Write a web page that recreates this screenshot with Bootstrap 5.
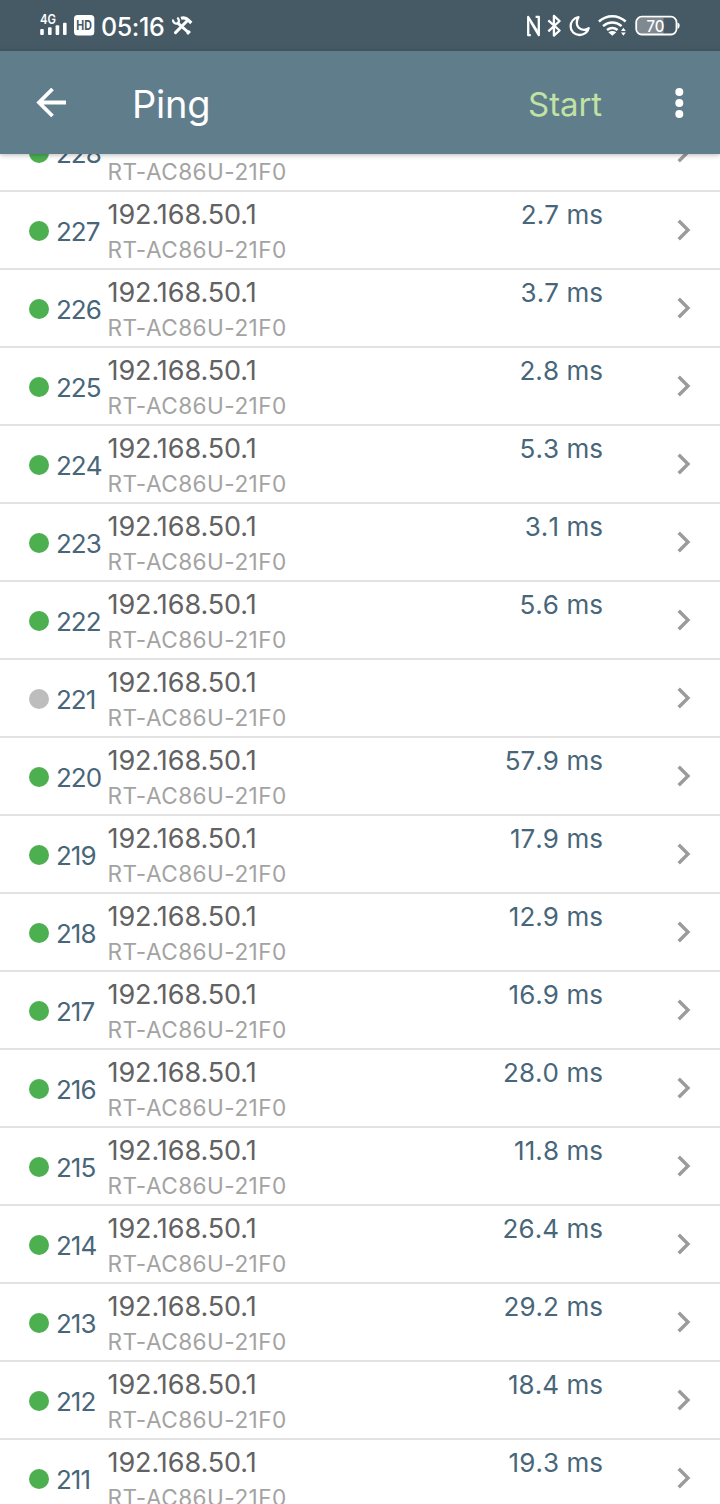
<!DOCTYPE html>
<html lang="en">
<head>
<meta charset="utf-8">
<meta name="viewport" content="width=device-width, initial-scale=1">
<title>Ping</title>
<link href="https://cdn.jsdelivr.net/npm/bootstrap@5.3.0/dist/css/bootstrap.min.css" rel="stylesheet">
<style>
  body { font-family: Inter, "Liberation Sans", sans-serif; height: 1504px; background: #fff; }
  svg { display: block; flex: none; }
  .status-bar { height: 51px; background: #465a65; padding-left: 38px; padding-right: 40px; }
  .clock { font-size: 25px; line-height: 51px; font-weight: 500; letter-spacing: -.4px; color: #fff; margin-left: 5px; padding-top: 2px; width: 69px; white-space: nowrap; }
  .app-bar { height: 103px; background: #607d8c; padding-left: 36px; padding-right: 34px; box-shadow: 0 1px 5px rgba(0,0,0,.28); z-index: 2; }
  .app-title { font-size: 38px; line-height: 50px; letter-spacing: -.2px; margin: 3px 0 0 66px; color: #fff; }
  .start-btn { font-size: 33px; line-height: 50px; color: #c0e3a4; margin: 3px 70px 0 auto; letter-spacing: -.1px; }
  .ping-list { margin-top: -40px; }
  .ping-row { height: 78px; border-bottom: 2px solid #e2e2e2; padding-left: 29px; padding-right: 29px; }
  .dot { width: 20px; height: 20px; flex: none; margin-top: 1px; background: #4caf50; }
  .dot.lost { background: #bdbdbd; }
  .seq { width: 51px; margin: 4px 0 0 7px; font-size: 26px; line-height: 36px; letter-spacing: -1px; font-kerning: none; color: #48667a; }
  .host { padding-top: 5px; }
  .ip { font-size: 27px; line-height: 36px; letter-spacing: -.08px; color: #626262; padding-left: .5px; }
  .host-name { font-size: 22.6px; line-height: 30px; letter-spacing: .45px; margin-top: 2px; color: #a3a3a3; padding-left: .5px; }
  .rtt { font-size: 26px; line-height: 36px; padding-top: 5px; margin-right: 74px; letter-spacing: .05px; font-kerning: none; color: #48667a; }
</style>
</head>
<body class="d-flex flex-column overflow-hidden">

<div class="status-bar d-flex justify-content-between flex-shrink-0">
  <div class="d-flex">
    <svg width="58" height="51" viewBox="38 0 58 51" fill="#fff">
      <text x="40" y="23.5" font-size="13" font-weight="600" textLength="16" lengthAdjust="spacingAndGlyphs">4G</text>
      <rect x="40.2" y="29" width="3.6" height="6" rx="1"/><rect x="48" y="27.3" width="3.6" height="7.7" rx="1"/>
      <rect x="55.6" y="25.3" width="3.6" height="9.7" rx="1"/><rect x="63" y="22.8" width="3.6" height="12.2" rx="1"/>
      <rect x="74" y="15" width="20.3" height="20.5" rx="3.5"/>
      <text x="76.3" y="30.2" font-size="13" font-weight="700" fill="#465a65" textLength="15.6" lengthAdjust="spacingAndGlyphs">HD</text>
    </svg>
    <span class="clock">05:16</span>
    <svg width="26" height="51" viewBox="170 0 26 51" fill="none" stroke="#fff">
      <path d="M177 22.3 188.5 32.5" stroke-width="3"/>
      <path d="M173 19.5a3.6 3.6 0 0 0 5 3.8 3.6 3.6 0 0 0-.8-5.5" stroke-width="2.2"/>
      <path d="M187 21 175.5 32.6" stroke-width="3" stroke-linecap="round"/>
      <path d="M181 18.3c3-1 5.5-.2 7.6 2l2.7 2.7" stroke-width="3.2"/>
      <path d="m187.5 31.5 2 2" stroke-width="4"/>
    </svg>
  </div>
  <svg width="156" height="51" viewBox="524 0 156 51" fill="none" stroke="#fff" stroke-width="2.3" stroke-linejoin="round">
    <path d="M530.8 35.2h-2.6V17l8.6 13.7M535.6 16.8h3.2V35.2L530.9 22"/>
    <path d="M548.3 20.3 559.6 30.5 553.9 35.6V15.9L559.6 21 548.3 31.3"/>
    <path d="M578.5 17.2c-4.7 1-7.9 4.7-7.9 9.1 0 5 4 8.7 8.8 8.7 4.4 0 8.3-2.9 9.3-6.8-1.7 1.2-3.1 1.6-4.7 1.6-4.4 0-7.2-3.1-7.2-6.9 0-2.2.5-3.9 1.7-5.7z"/>
    <path d="M598.9 21.5c8.1-7.1 18.7-7.1 26.8 0M603 26.1c5.7-4.8 12.9-4.8 18.6 0M607 30c3.2-2.5 7.4-2.5 10.6 0" stroke-width="2.5"/>
    <path d="M608.3 32.3q4-2.4 8 0l-4 3.4z" fill="#fff" stroke="none"/>
    <path d="m621 31 2.4-3.3 2.4 3.3zM621 32.4l2.4 3.3 2.4-3.3z" fill="#fff" stroke="none"/>
    <path d="M641.5 17.5H663.5V34H641.5a4.5 4.5 0 0 1-4.5-4.5V22a4.5 4.5 0 0 1 4.5-4.5z" fill="#7f898f" stroke="none"/>
    <rect x="636.2" y="16.7" width="40.3" height="17.8" rx="5.5" stroke-width="1.8"/>
    <path d="M677.5 22.5q2.2.3 2.2 3.1t-2.2 3.1z" fill="#fff" stroke="none"/>
    <text x="646.5" y="31.5" font-size="16" font-weight="500" fill="#fff" stroke="none" textLength="18" lengthAdjust="spacingAndGlyphs">70</text>
  </svg>
</div>

<header class="app-bar d-flex align-items-center position-relative flex-shrink-0">
  <svg width="30" height="30" viewBox="0 0 30 30" fill="none" stroke="#fff" stroke-width="3.8"><path d="M16.5 1 3 14.5 16.5 28M3.5 14.5H30"/></svg>
  <h1 class="app-title fw-normal">Ping</h1>
  <span class="start-btn">Start</span>
  <svg width="14" height="32" viewBox="0 0 14 32" fill="#fff"><circle cx="7.3" cy="5" r="4"/><circle cx="7.3" cy="16" r="4"/><circle cx="7.3" cy="27" r="4"/></svg>
</header>

<main class="flex-grow-1 overflow-hidden">
  <div class="ping-list" id="pings"></div>
</main>

<script>
  const pings = [
    [228, '3.0'], [227, '2.7'], [226, '3.7'], [225, '2.8'], [224, '5.3'], [223, '3.1'],
    [222, '5.6'], [221, null], [220, '57.9'], [219, '17.9'], [218, '12.9'], [217, '16.9'],
    [216, '28.0'], [215, '11.8'], [214, '26.4'], [213, '29.2'], [212, '18.4'], [211, '19.3']
  ];
  document.getElementById('pings').innerHTML = pings.map(([seq, ms]) => `
    <div class="ping-row d-flex align-items-center">
      <span class="dot rounded-circle ${ms ? '' : 'lost'}"></span>
      <span class="seq">${seq}</span>
      <div class="host align-self-start">
        <div class="ip">192.168.50.1</div>
        <div class="host-name">RT-AC86U-21F0</div>
      </div>
      <span class="rtt ms-auto align-self-start">${ms ? ms + ' ms' : ''}</span>
      <svg width="14" height="24" viewBox="0 0 14 24" fill="none" stroke="#9b9b9b" stroke-width="3.4"><path d="M1.7 2.7 11 12 1.7 21.3"/></svg>
    </div>`).join('');
</script>
<script src="https://cdn.jsdelivr.net/npm/bootstrap@5.3.0/dist/js/bootstrap.bundle.min.js"></script>
</body>
</html>
